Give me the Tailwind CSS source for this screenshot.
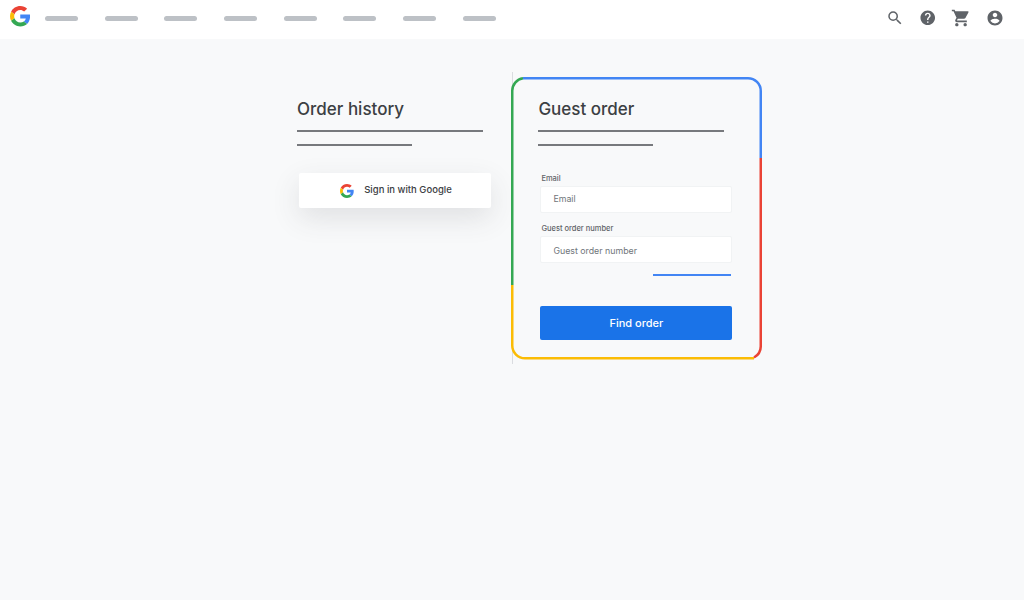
<!DOCTYPE html>
<html lang="en">
<head>
  <meta charset="UTF-8" />
  <meta name="viewport" content="width=device-width, initial-scale=1.0"/>
  <title>Order lookup</title>
  <script src="https://cdn.jsdelivr.net/npm/@tailwindcss/browser@4"></script>
</head>
<body class="h-[600px] w-[1024px] overflow-hidden bg-[#f8f9fa] font-['Inter',sans-serif] text-[#3c4043]">
  <!-- Top bar -->
  <header class="flex h-[39px] items-center justify-between bg-white pl-[9.500px] pr-[20px]">
    <div class="flex items-center">
      <svg class="mb-[6px] h-[20.500px] w-[20.500px]" viewBox="0 0 48 48">
        <path fill="#EA4335" d="M24 9.500c3.500 0 6.700 1.300 9.200 3.600l6.900-6.900C35.900 2.400 30.400 0 24 0 14.600 0 6.500 5.400 2.600 13.200l8 6.200C12.500 13.600 17.800 9.500 24 9.500z"/>
        <path fill="#4285F4" d="M47 24.500c0-1.600-.1-3.100-.4-4.500H24v9h12.900c-.6 3-2.200 5.500-4.700 7.200l7.700 6C44.400 37.900 47 31.800 47 24.500z"/>
        <path fill="#FBBC05" d="M10.600 28.600c-.5-1.400-.8-3-.8-4.600s.3-3.200.8-4.600l-8-6.200C.9 16.500 0 20.100 0 24s.9 7.500 2.600 10.800l8-6.200z"/>
        <path fill="#34A853" d="M24 48c6.500 0 11.900-2.100 15.900-5.800l-7.700-6c-2.200 1.400-4.900 2.300-8.200 2.300-6.200 0-11.500-4.100-13.400-9.900l-8 6.200C6.500 42.600 14.600 48 24 48z"/>
      </svg>
      <nav class="mb-[3px] ml-[15px] flex gap-[26.700px]">
        <span class="h-[5px] w-[33px] rounded-full bg-[#bdc1c6]"></span>
        <span class="h-[5px] w-[33px] rounded-full bg-[#bdc1c6]"></span>
        <span class="h-[5px] w-[33px] rounded-full bg-[#bdc1c6]"></span>
        <span class="h-[5px] w-[33px] rounded-full bg-[#bdc1c6]"></span>
        <span class="h-[5px] w-[33px] rounded-full bg-[#bdc1c6]"></span>
        <span class="h-[5px] w-[33px] rounded-full bg-[#bdc1c6]"></span>
        <span class="h-[5px] w-[33px] rounded-full bg-[#bdc1c6]"></span>
        <span class="h-[5px] w-[33px] rounded-full bg-[#bdc1c6]"></span>
      </nav>
    </div>
    <div class="mb-[3px] flex items-center text-[#5f6368]">
      <svg class="h-[18px] w-[18px] fill-current" viewBox="0 0 24 24"><path d="M15.500 14h-.79l-.28-.27A6.470 6.470 0 0 0 16 9.500 6.500 6.500 0 1 0 9.500 16c1.610 0 3.090-.59 4.230-1.570l.27.28v.79l5 4.990L20.490 19l-4.990-5zm-6 0C7.010 14 5 11.990 5 9.500S7.010 5 9.500 5 14 7.010 14 9.500 11.990 14 9.500 14z"/></svg>
      <svg class="ml-[15.500px] h-[17.500px] w-[17.500px] fill-current" viewBox="0 0 24 24"><path d="M12 2C6.480 2 2 6.480 2 12s4.480 10 10 10 10-4.480 10-10S17.520 2 12 2zm1 17h-2v-2h2v2zm2.070-7.750l-.9.920C13.450 12.900 13 13.500 13 15h-2v-.5c0-1.100.45-2.100 1.170-2.830l1.240-1.260c.37-.36.590-.86.590-1.410 0-1.100-.9-2-2-2s-2 .9-2 2H8c0-2.210 1.790-4 4-4s4 1.790 4 4c0 .88-.36 1.680-.93 2.250z"/></svg>
      <svg class="ml-[14.500px] h-[20px] w-[20px] fill-current" viewBox="0 0 24 24"><path d="M7 18c-1.100 0-1.990.9-1.990 2S5.900 22 7 22s2-.9 2-2-.9-2-2-2zM1 2v2h2l3.600 7.590-1.350 2.450c-.16.280-.25.610-.25.960 0 1.100.9 2 2 2h12v-2H7.420c-.14 0-.25-.11-.25-.25l.03-.12.900-1.630h7.450c.75 0 1.410-.41 1.750-1.030l3.580-6.490A1 1 0 0 0 20 4H5.210l-.94-2H1zm16 16c-1.100 0-1.990.9-1.990 2s.89 2 1.990 2 2-.9 2-2-.9-2-2-2z"/></svg>
      <svg class="ml-[15px] h-[18px] w-[18px] fill-current" viewBox="0 0 24 24"><path d="M12 2C6.480 2 2 6.480 2 12s4.480 10 10 10 10-4.480 10-10S17.520 2 12 2zm0 3c1.660 0 3 1.340 3 3s-1.340 3-3 3-3-1.340-3-3 1.340-3 3-3zm0 14.200a7.200 7.200 0 0 1-6-3.220c.03-1.990 4-3.080 6-3.080 1.990 0 5.970 1.090 6 3.080a7.200 7.200 0 0 1-6 3.220z"/></svg>
    </div>
  </header>

  <main class="pl-[297px] pt-[33px]">
    <div class="flex">
      <!-- Order history -->
      <section class="w-[214px] pt-[25px]">
        <h2 class="text-[17px] leading-[24px] font-medium text-[#3c4043]">Order history</h2>
        <div class="mt-[9px] h-[2px] w-[186px] bg-[#77797d]"></div>
        <div class="mt-[12px] h-[2px] w-[115px] bg-[#77797d]"></div>
        <button class="mt-[27px] ml-[2px] flex h-[35px] w-[192px] items-center justify-center gap-[10px] rounded-[2px] bg-white pl-[2px] text-[9.500px] font-medium text-[#3c4043] shadow-[0_10px_28px_rgba(60,64,67,0.13)]">
          <svg class="h-[14px] w-[14px]" viewBox="0 0 48 48">
            <path fill="#EA4335" d="M24 9.500c3.500 0 6.700 1.300 9.200 3.600l6.900-6.900C35.900 2.400 30.400 0 24 0 14.600 0 6.500 5.400 2.600 13.200l8 6.200C12.500 13.600 17.800 9.500 24 9.500z"/>
            <path fill="#4285F4" d="M47 24.500c0-1.600-.1-3.100-.4-4.500H24v9h12.900c-.6 3-2.200 5.500-4.700 7.200l7.700 6C44.400 37.900 47 31.800 47 24.500z"/>
            <path fill="#FBBC05" d="M10.600 28.600c-.5-1.400-.8-3-.8-4.600s.3-3.200.8-4.600l-8-6.200C.9 16.500 0 20.100 0 24s.9 7.500 2.600 10.800l8-6.200z"/>
            <path fill="#34A853" d="M24 48c6.500 0 11.900-2.100 15.900-5.800l-7.700-6c-2.200 1.400-4.900 2.300-8.200 2.300-6.200 0-11.500-4.100-13.400-9.900l-8 6.200C6.500 42.600 14.600 48 24 48z"/>
          </svg>
          <span>Sign in with Google</span>
        </button>
      </section>

      <!-- Guest order card -->
      <section class="relative h-[292px] w-[251px] pl-[27.400px] pt-[25px]">
        <div class="absolute left-[1px] top-0 h-[292px] w-px bg-[#dadce0]"></div>
        <svg class="absolute left-0 top-[5px]" width="251" height="283" viewBox="0 0 251 283" fill="none" stroke-width="2.500">
          <path stroke="#4285F4" d="M12 1.250H237A12.750 12.750 0 0 1 249.750 14V81"/>
          <path stroke="#EA4335" d="M249.750 81V269A12.750 12.750 0 0 1 243 280.500"/>
          <path stroke="#FBBC05" d="M243 281.250H14A12.750 12.750 0 0 1 1.250 268.500V208"/>
          <path stroke="#34A853" d="M1.250 208V14A12.750 12.750 0 0 1 12 1.250"/>
        </svg>
        <h2 class="relative text-[17px] leading-[24px] font-medium text-[#3c4043]">Guest order</h2>
        <div class="mt-[9px] h-[2px] w-[186px] bg-[#77797d]"></div>
        <div class="mt-[12px] h-[2px] w-[115px] bg-[#77797d]"></div>
        <form class="relative mt-[27px] ml-[2px] w-[192px]">
          <label class="block pl-[1px] text-[7.500px] leading-[12px] font-medium text-[#5f6368]">Email</label>
          <div class="mt-[.5px] flex h-[27px] w-[192px] items-center rounded-[2px] border border-[#f1f3f4] bg-white pl-[12px] text-[8.800px] text-[#70757a]">Email</div>
          <label class="mt-[10.500px] block pl-[1px] text-[7.500px] leading-[12px] font-medium text-[#5f6368]">Guest order number</label>
          <div class="mt-[1px] flex h-[27px] w-[192px] items-center rounded-[2px] border border-[#f1f3f4] bg-white pl-[12px] pt-[2px] text-[8.800px] text-[#70757a]">Guest order number</div>
          <div class="mt-[11px] ml-[113px] h-[2px] w-[78px] bg-[#4285f4]"></div>
          <button type="button" class="mt-[30px] flex h-[34px] w-[192px] items-center justify-center rounded-[2px] bg-[#1a73e8] text-[11px] font-medium text-white">Find order</button>
        </form>
      </section>
    </div>
  </main>
</body>
</html>
